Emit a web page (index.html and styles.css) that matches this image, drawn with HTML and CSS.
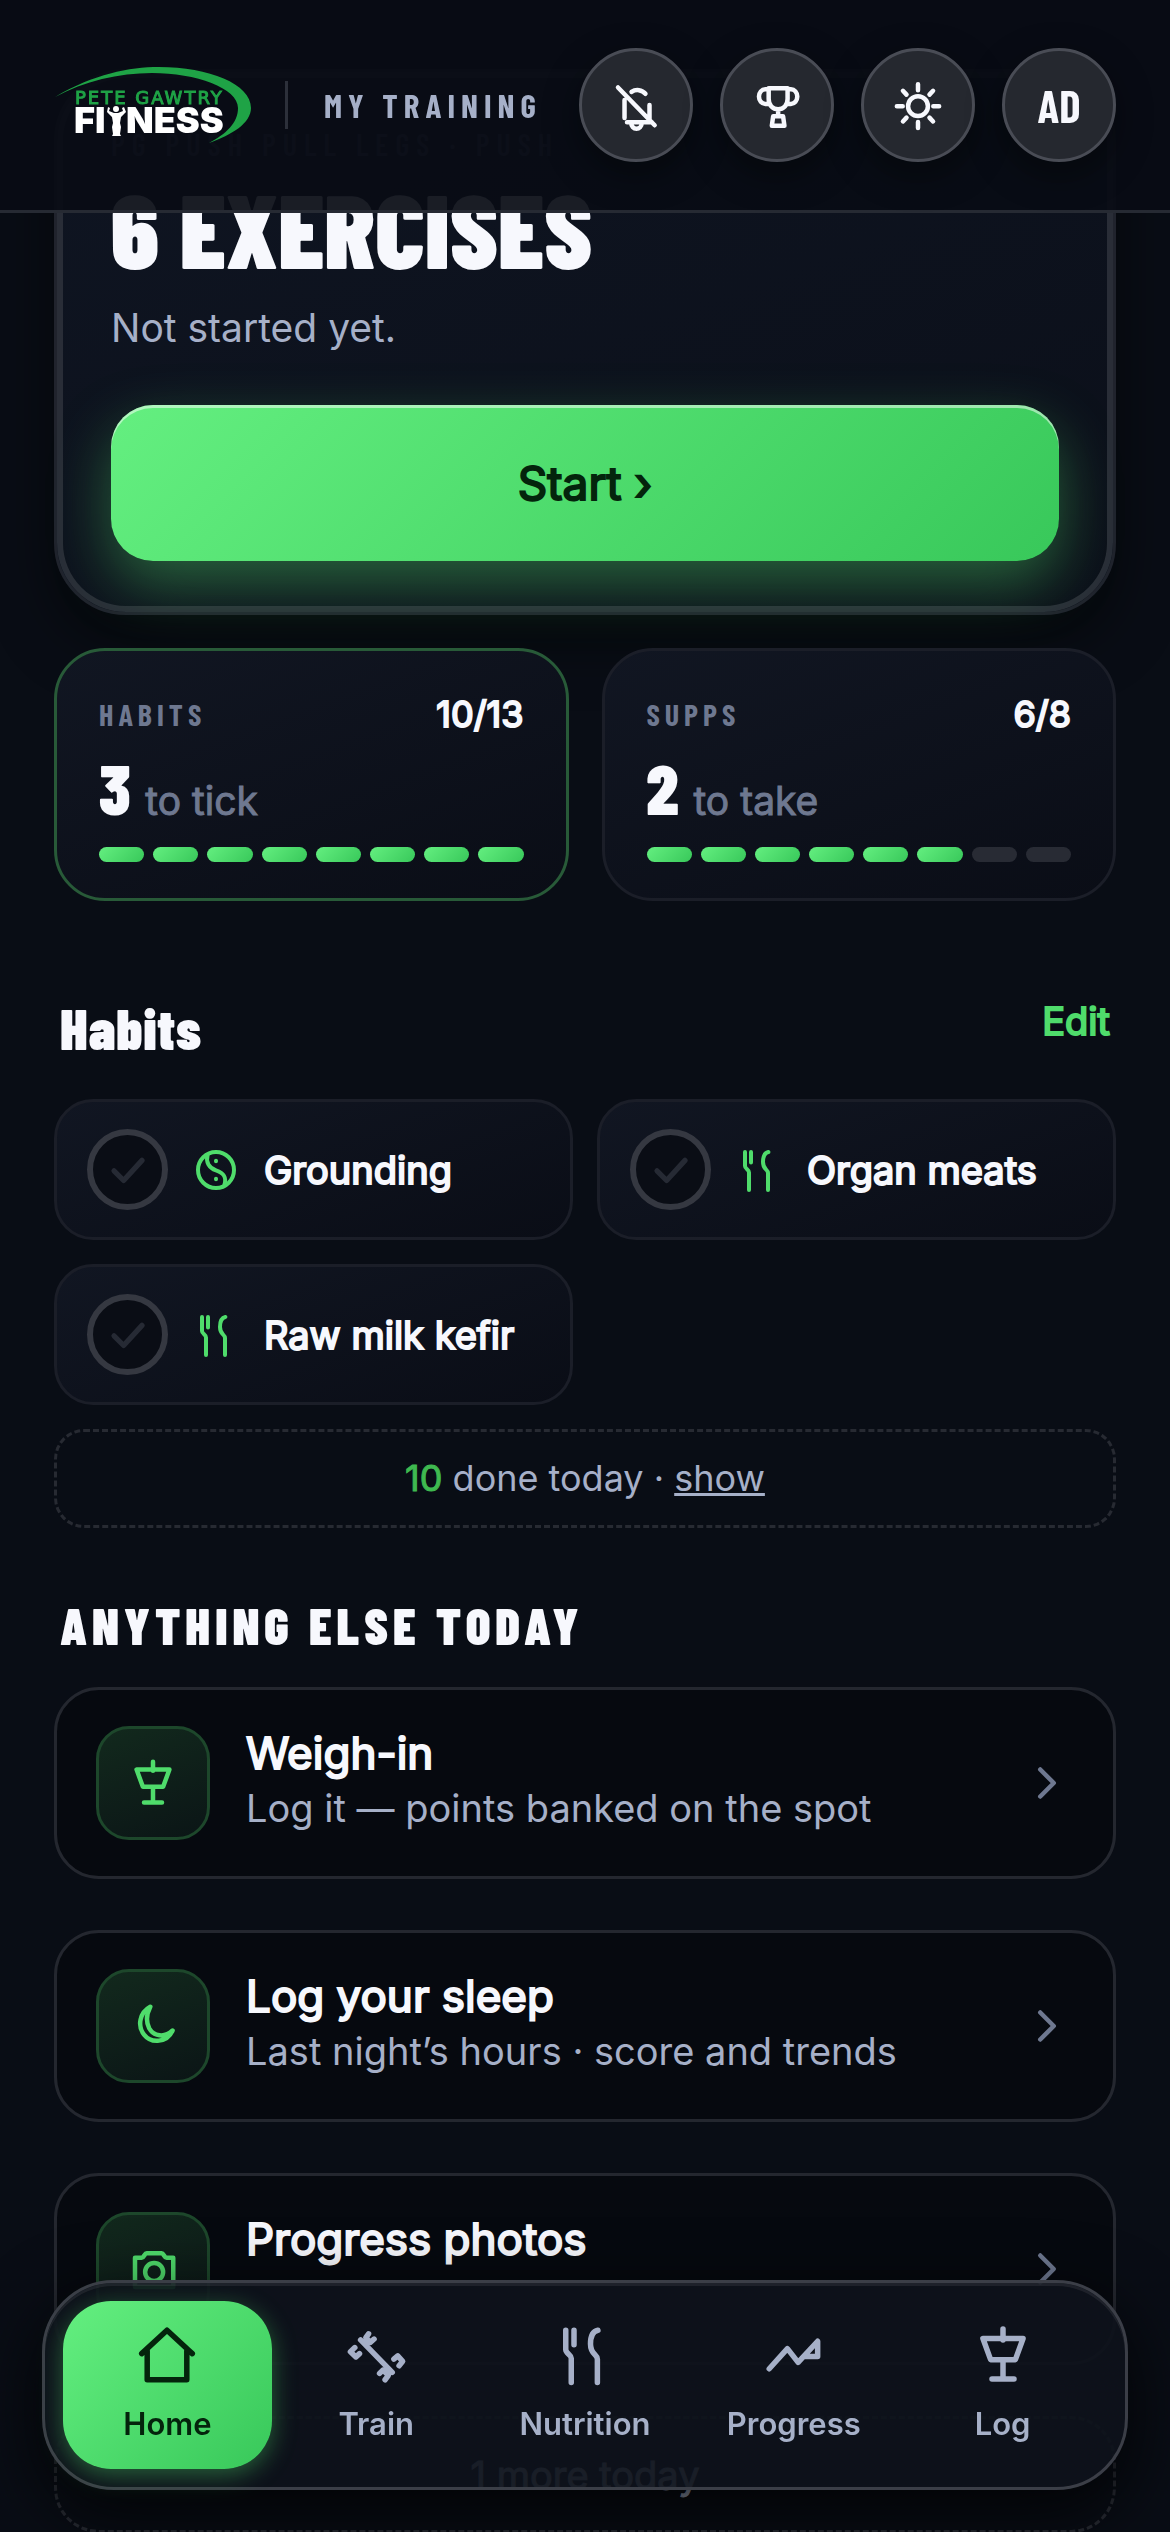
FILE: index.html
```
<!DOCTYPE html>
<html lang="en">
<head>
    <meta charset="UTF-8">
    <meta name="viewport" content="width=device-width, initial-scale=1.0">
    <title>My Training</title>

    <link rel="stylesheet" href="styles.css">
</head>
<body>
    <svg class="sprite" aria-hidden="true">
        <symbol id="i-cutlery" viewBox="0 0 24 24">
            <path d="M5 3v7c0 1.500 2 1.800 2 3.200V22M8 3v5.300M16.700 3C14.800 3.400 14 5 14 8c0 4 2.500 3.500 2.500 5.500V22" />
        </symbol>
        <symbol id="i-scale" viewBox="0 0 24 24">
            <path d="M12 2.500v4M4.700 6h14.600l-2.800 7.700h-9zM12 13.700v7M8 20.700h8" />
        </symbol>
        <symbol id="i-check" viewBox="0 0 24 24">
            <path d="M4 12.500l5.500 5.500L20 6.500" />
        </symbol>
        <symbol id="i-chevron" viewBox="0 0 24 24">
            <path d="M9 6l6 6-6 6" />
        </symbol>
    </svg>

    <header class="topbar">
        <svg class="logo" viewBox="0 0 198 78" role="img" aria-label="Pete Gawtry Fitness">
            <path class="logo-swoosh" d="M1 31C40 8 75 1 105 1C155 1 197 18 197 42C197 57 178 69 155 77C172 68 184 57 184 42C184 22 142 7 98 7C65 7 30 15 1 31Z" />
            <text class="logo-name" x="21" y="38">PETE GAWTRY</text>
            <text class="logo-word" x="20" y="67">FI</text>
            <text class="logo-word" x="72" y="67">NESS</text>
            <g class="logo-man">
                <circle cx="62" cy="43" r="3" />
                <path d="M54 41l2 1-1 3 5 2h4l5-2-1-3 2-1 2 5-5 5-1 6 1 4-1 7 1 2h-9l1-2-1-7 1-4-1-6-5-5z" />
            </g>
        </svg>
        <h1 class="page-name">My Training</h1>
        <div class="actions">
            <button class="round" aria-label="Notifications off">
                <svg class="icon" viewBox="0 0 24 24"><path d="M4 4.200L20.300 21M6.900 9.800v8M10 6.200c2-1.400 4.700-1 6.200.8M18 12v7M8 19.700h11M9.900 20.200a2.300 2.300 0 0 0 4.600 0" /></svg>
            </button>
            <button class="round" aria-label="Awards">
                <svg class="icon" viewBox="0 0 24 24"><path d="M8.300 4.500h8.400v4.800c0 2.800-1.800 4.600-4.200 4.600s-4.200-1.800-4.200-4.600zM8.300 5H6.800a2.600 3 0 0 0 0 6.500h1.700M16.700 5h1.500a2.600 3 0 0 1 0 6.500h-1.700M12.500 14v3M10.300 17h4.400l.6 4.200H9.700z" /></svg>
            </button>
            <button class="round" aria-label="Light theme">
                <svg class="icon" viewBox="0 0 24 24"><circle cx="12" cy="12.500" r="4.400" /><path d="M12 2.800v2.600M12 19.600v2.600M2.600 12.500h2.600M18.800 12.500h2.600M5.300 5.700l1.600 1.700M17.100 17.600l1.600 1.700M18.700 5.700l-1.600 1.700M6.900 17.600l-1.600 1.700" /></svg>
            </button>
            <button class="round initials" aria-label="Account">AD</button>
        </div>
    </header>

    <main class="screen">
        <section class="hero">
            <p class="eyebrow">PG Push Pull Legs · Push</p>
            <h2 class="hero-title">6 Exercises</h2>
            <p class="hero-text">Not started yet.</p>
            <button class="start">Start ›</button>
        </section>

        <section class="stats">
            <article class="stat active">
                <div class="stat-head">
                    <h3>Habits</h3>
                    <span class="stat-count">10/13</span>
                </div>
                <p class="stat-left"><b>3</b> <span>to tick</span></p>
                <div class="bars">
                    <i class="on"></i><i class="on"></i><i class="on"></i><i class="on"></i><i class="on"></i><i class="on"></i><i class="on"></i><i class="on"></i>
                </div>
            </article>
            <article class="stat">
                <div class="stat-head">
                    <h3>Supps</h3>
                    <span class="stat-count">6/8</span>
                </div>
                <p class="stat-left"><b>2</b> <span>to take</span></p>
                <div class="bars">
                    <i class="on"></i><i class="on"></i><i class="on"></i><i class="on"></i><i class="on"></i><i class="on"></i><i></i><i></i>
                </div>
            </article>
        </section>

        <section class="habits">
            <div class="section-head">
                <h2>Habits</h2>
                <a href="#" class="edit">Edit</a>
            </div>
            <div class="habit-grid">
                <button class="habit">
                    <span class="tick"><svg class="icon"><use href="#i-check" /></svg></span>
                    <svg class="icon" viewBox="0 0 24 24"><circle cx="12" cy="12" r="9" /><path d="M7.800 4.600C6.800 8 8.500 11 12 12.200s5.500 3 4.200 7.200M12 7.400v.2M12 16.400v.2" /></svg>
                    Grounding
                </button>
                <button class="habit">
                    <span class="tick"><svg class="icon"><use href="#i-check" /></svg></span>
                    <svg class="icon"><use href="#i-cutlery" /></svg>
                    Organ meats
                </button>
                <button class="habit">
                    <span class="tick"><svg class="icon"><use href="#i-check" /></svg></span>
                    <svg class="icon"><use href="#i-cutlery" /></svg>
                    Raw milk kefir
                </button>
            </div>
            <p class="done"><b>10</b> done today · <a href="#">show</a></p>
        </section>

        <section class="today">
            <h2>Anything else today</h2>
            <a href="#" class="task">
                <span class="tile"><svg class="icon"><use href="#i-scale" /></svg></span>
                <span class="task-text">
                    <strong>Weigh-in</strong>
                    <span>Log it — points banked on the spot</span>
                </span>
                <svg class="icon chevron"><use href="#i-chevron" /></svg>
            </a>
            <a href="#" class="task">
                <span class="tile"><svg class="icon" viewBox="0 0 24 24"><path d="M10.800 3.400C6 6 5 12 8 15.800c3.300 4.200 10.300 3.600 12.700-1.800C17 17.500 12.300 16.500 10.300 13 8.800 10 9.300 6.300 10.800 3.400z" /></svg></span>
                <span class="task-text">
                    <strong>Log your sleep</strong>
                    <span>Last night’s hours · score and trends</span>
                </span>
                <svg class="icon chevron"><use href="#i-chevron" /></svg>
            </a>
            <a href="#" class="task">
                <span class="tile"><svg class="icon" viewBox="0 0 24 24"><path d="M4 7h3c1 0 1.200-2 2.200-2h6.600c1 0 1.200 2 2.200 2h3v13H4z" /><circle cx="12.500" cy="13.300" r="4" /></svg></span>
                <span class="task-text">
                    <strong>Progress photos</strong>
                    <span>&nbsp;</span>
                </span>
                <svg class="icon chevron"><use href="#i-chevron" /></svg>
            </a>
            <button class="more">1 more today</button>
        </section>
    </main>

    <nav class="tabs">
        <a href="#" class="tab current">
            <svg class="icon" viewBox="0 0 24 24"><path d="M2.800 11.500L12 3l9.200 8.500M4.800 10.500V21h14.400V10.500" /></svg>
            Home
        </a>
        <a href="#" class="tab">
            <svg class="icon" viewBox="0 0 24 24"><path d="M6.400 6.500L17.900 18.300M9.300 4.300L8.300 5.700l1.700 1.700 1.300-1.200M4.300 9.300L2.700 10.800l2 1.900 1.300-1.200M18.500 13.500l1.400-1.200 1.800 2-1.300 1.600M13.300 18.700l1.200-1.200 2 1.900-1.200 1.600" /></svg>
            Train
        </a>
        <a href="#" class="tab">
            <svg class="icon"><use href="#i-cutlery" /></svg>
            Nutrition
        </a>
        <a href="#" class="tab">
            <svg class="icon" viewBox="0 0 24 24"><path d="M3 17l6.600-7.300 3.900 5L20.600 7v5.500h-5" /></svg>
            Progress
        </a>
        <a href="#" class="tab">
            <svg class="icon"><use href="#i-scale" /></svg>
            Log
        </a>
    </nav>
</body>
</html>
```
FILE: styles.css
```
:root {
    --bg: #090d15;
    --text: #f7f8fd;
    --soft: #a6b0c8;
    --muted: #6e7890;
    --green: #4fdc6b;
    --grad: linear-gradient(135deg, #64ef80, #38c85a);
    --card: linear-gradient(160deg, #111622, #0a0d16);
    --display: "Barlow Condensed", "Roboto Condensed", sans-serif;
}

* {
    box-sizing: border-box;
    margin: 0;
    padding: 0;
}

body {
    font-family: Inter, "Liberation Sans", sans-serif;
    font-size: 39px;
    line-height: 48px;
    background-color: var(--bg);
    color: var(--text);
    height: 100vh;
    overflow: hidden;
}

button {
    font: inherit;
    color: inherit;
    background: none;
    border: none;
}

a {
    color: inherit;
    text-decoration: none;
}

.sprite {
    display: none;
}

.icon {
    width: 54px;
    height: 54px;
    flex-shrink: 0;
    fill: none;
    stroke: currentColor;
    stroke-width: 2;
    stroke-linecap: round;
    stroke-linejoin: round;
}

/* drawn heavier than the regular cut */
.start,
.stat-count,
.edit,
.habit,
.task-text strong {
    font-weight: 400;
    -webkit-text-stroke: 2px currentColor;
}

.stat-left span,
.done b,
.more {
    font-weight: 400;
    -webkit-text-stroke: 1px currentColor;
}

/* top bar */

.topbar {
    position: fixed;
    top: 0;
    left: 0;
    right: 0;
    z-index: 2;
    display: flex;
    align-items: center;
    padding: 48px 54px;
    background-color: rgba(9, 12, 20, 0.93);
    border-bottom: 3px solid #262a33;
}

.logo {
    width: 198px;
    height: 78px;
}

.logo-swoosh {
    fill: #1fa346;
}

.logo-name {
    font-family: "DejaVu Sans", sans-serif;
    font-size: 18px;
    letter-spacing: 2px;
    fill: #1fa346;
    stroke: #1fa346;
}

.logo-word {
    font-size: 36px;
    font-weight: 900;
    fill: #fff;
}

.logo-man {
    fill: #fff;
}

.page-name {
    margin-left: 33px;
    padding-left: 36px;
    border-left: 3px solid #2c303a;
    font-family: var(--display);
    font-size: 33px;
    font-weight: 700;
    letter-spacing: 6px;
    text-transform: uppercase;
    white-space: nowrap;
    color: var(--soft);
}

.actions {
    display: flex;
    gap: 27px;
    margin-left: auto;
}

.round {
    display: flex;
    align-items: center;
    justify-content: center;
    width: 114px;
    height: 114px;
    border: 3px solid #494c55;
    border-radius: 50%;
    background-color: #25282f;
    box-shadow: 0 12px 36px rgba(0, 0, 0, 0.4);
}

.initials {
    font-family: var(--display);
    font-size: 45px;
    font-weight: 700;
}

/* content */

.screen {
    height: 100%;
    overflow-y: auto;
    scrollbar-width: none;
    padding: 69px 54px 0;
}

.hero {
    padding: 54px 54px 51px;
    border: 3px solid #20232d;
    border-radius: 72px;
    background: linear-gradient(160deg, #0f1522, #0b0f19);
    box-shadow: inset 0 0 0 6px #292d37, 0 24px 60px rgba(0, 0, 0, 0.5);
}

.eyebrow {
    font-family: var(--display);
    font-size: 30px;
    line-height: 36px;
    font-weight: 600;
    letter-spacing: 7px;
    text-transform: uppercase;
    color: #3c4352;
}

.hero-title {
    margin-top: 12px;
    font-family: var(--display);
    font-size: 104px;
    line-height: 108px;
    font-weight: 900;
    text-transform: uppercase;
}

.hero-text {
    margin: 22px 0 53px;
    color: var(--soft);
}

.start {
    display: block;
    width: 100%;
    height: 156px;
    border-radius: 42px;
    background: var(--grad);
    box-shadow: inset 0 3px 0 rgba(255, 255, 255, 0.5), 0 24px 60px rgba(79, 220, 107, 0.4);
    color: #04240c;
    font-size: 46px;
}

.stats {
    display: grid;
    grid-template-columns: 1fr 1fr;
    gap: 33px;
    margin-top: 33px;
}

.stat {
    padding: 39px 42px 36px;
    border: 3px solid #1b1e28;
    border-radius: 51px;
    background: var(--card);
}

.stat.active {
    border-color: #285a38;
}

.stat-head {
    display: flex;
    justify-content: space-between;
}

.stat-head h3 {
    font-family: var(--display);
    font-size: 30px;
    font-weight: 700;
    letter-spacing: 5px;
    text-transform: uppercase;
    color: var(--muted);
}

.stat-count {
    font-size: 36px;
}

.stat-left {
    display: flex;
    align-items: baseline;
    gap: 15px;
    margin: 12px 0 21px;
    color: var(--muted);
}

.stat-left b {
    font-family: var(--display);
    font-size: 69px;
    line-height: 76px;
    font-weight: 900;
    color: var(--text);
}

.bars {
    display: flex;
    gap: 9px;
}

.bars i {
    flex: 1;
    height: 15px;
    border-radius: 8px;
    background: #282b34;
}

.bars .on {
    background: var(--grad);
}

/* habits */

.section-head {
    display: flex;
    justify-content: space-between;
    margin: 90px 6px 36px;
}

.section-head h2 {
    font-family: var(--display);
    font-size: 57px;
    line-height: 72px;
    font-weight: 900;
    letter-spacing: 1px;
}

.edit {
    font-size: 38px;
    line-height: 60px;
    color: var(--green);
}

.habit-grid {
    display: grid;
    grid-template-columns: 1fr 1fr;
    gap: 24px;
}

.habit {
    display: flex;
    align-items: center;
    gap: 24px;
    height: 141px;
    padding: 0 30px;
    border: 3px solid #1b1e28;
    border-radius: 39px;
    background: var(--card);
    font-size: 38px;
    white-space: nowrap;
}

.habit > .icon {
    width: 48px;
    height: 48px;
    color: var(--green);
}

.tick {
    display: flex;
    align-items: center;
    justify-content: center;
    width: 81px;
    height: 81px;
    border: 6px solid #353841;
    border-radius: 50%;
    background-color: #0a0d15;
    color: #262a34;
}

.tick .icon {
    width: 42px;
    height: 42px;
    stroke-width: 3;
}

.done,
.more {
    border: 3px dashed #272a32;
    text-align: center;
}

.done {
    margin-top: 24px;
    padding: 21px;
    border-radius: 30px;
    font-size: 36px;
    line-height: 51px;
    color: var(--soft);
}

.done b {
    color: #3fb950;
}

.done a {
    text-decoration: underline;
}

/* anything else */

.today h2 {
    margin: 64px 6px 29px;
    font-family: var(--display);
    font-size: 51px;
    line-height: 66px;
    font-weight: 900;
    letter-spacing: 5px;
    text-transform: uppercase;
}

.task {
    display: flex;
    align-items: center;
    gap: 36px;
    height: 192px;
    margin-bottom: 51px;
    padding: 0 39px;
    border: 3px solid #24272f;
    border-radius: 45px;
    background-color: #06090f;
}

.tile {
    display: flex;
    align-items: center;
    justify-content: center;
    width: 114px;
    height: 114px;
    border: 3px solid #1d472b;
    border-radius: 33px;
    background: linear-gradient(160deg, #12291d, #0b1516);
    color: var(--green);
}

.task-text {
    flex: 1;
    display: flex;
    flex-direction: column;
    gap: 4px;
    padding-bottom: 8px;
}

.task-text strong {
    font-size: 44px;
    line-height: 54px;
}

.task-text span {
    font-size: 38px;
    color: var(--soft);
}

.chevron {
    color: var(--muted);
}

.more {
    display: block;
    width: 100%;
    height: 117px;
    border-radius: 45px;
    font-size: 38px;
    color: var(--soft);
}

/* bottom tabs */

.tabs {
    position: fixed;
    left: 42px;
    right: 42px;
    bottom: 42px;
    z-index: 2;
    display: flex;
    padding: 18px;
    border: 3px solid #3b3e47;
    border-radius: 72px;
    background-color: rgba(14, 18, 27, 0.93);
    box-shadow: inset 0 3px 0 rgba(255, 255, 255, 0.07), 0 24px 72px rgba(0, 0, 0, 0.8);
}

.tab {
    flex: 1;
    display: flex;
    flex-direction: column;
    align-items: center;
    gap: 12px;
    height: 168px;
    padding-top: 21px;
    border-radius: 48px;
    font-size: 31px;
    font-weight: 600;
    color: var(--soft);
}

.tab .icon {
    width: 66px;
    height: 66px;
}

.tab.current {
    background: var(--grad);
    box-shadow: 0 6px 24px rgba(79, 220, 107, 0.4);
    color: #04240c;
}
```
